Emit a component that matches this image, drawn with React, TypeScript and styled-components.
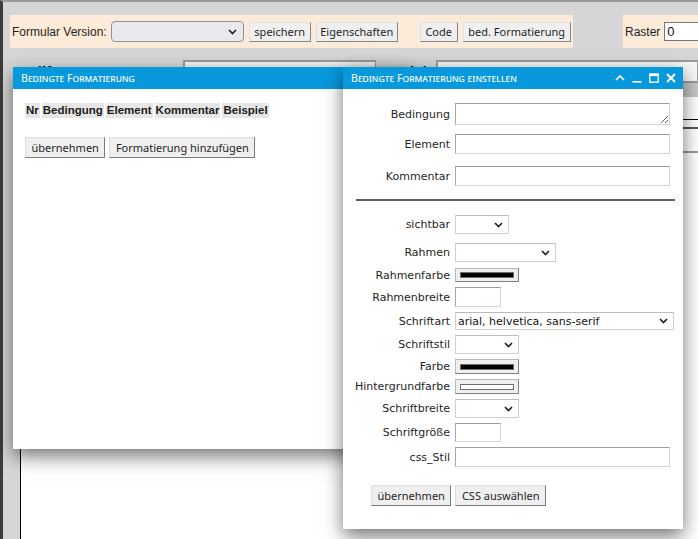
import React from 'react';
import styled, { createGlobalStyle } from 'styled-components';

const Global = createGlobalStyle`
  html, body { margin: 0; padding: 0; background: #d6d6d6; overflow: hidden; }
  body { font-family: "DejaVu Sans", sans-serif; }
`;

const Desktop = styled.div`
  position: relative;
  width: 698px;
  height: 539px;
  overflow: hidden;
`;

const Page = styled.div`
  width: 698px;
  height: 539px;
  box-sizing: border-box;
  border-top: 2px solid #9a9a9a;
  border-left: 3px solid #3c3c3c;
  background: #d6d6d6;
  display: flex;
  flex-direction: column;
`;

const Toolbar = styled.div`
  display: flex;
  gap: 50px;
  height: 33px;
  margin: 13px 0 0 7px;
`;

const Segment = styled.div<{ $w?: number }>`
  display: flex;
  align-items: center;
  background: #fbebd8;
  box-sizing: border-box;
  padding-left: 2px;
  ${(p) => (p.$w ? `width: ${p.$w}px; flex: none;` : 'flex: 1;')}
`;

const ToolLabel = styled.span`
  flex: none;
  white-space: nowrap;
  font-family: "Liberation Sans", Arial, sans-serif;
  font-size: 12px;
  color: #1e1e1e;
`;

const ToolSelect = styled.div`
  flex: none;
  display: flex;
  align-items: center;
  justify-content: flex-end;
  width: 133px;
  height: 21px;
  box-sizing: border-box;
  margin-left: 4px;
  padding-right: 6px;
  border: 1px solid #8f8f9d;
  border-radius: 4px;
  background: #e9e9ed;
`;

const ToolButton = styled.button<{ $w: number; $ml?: number }>`
  flex: none;
  width: ${(p) => p.$w}px;
  height: 20px;
  margin-left: ${(p) => p.$ml ?? 5}px;
  padding: 0;
  box-sizing: border-box;
  font-family: "Noto Sans", sans-serif;
  font-size: 11px;
  color: #1e1e1e;
  background: #efefef;
  border: 1px solid #e2e2e2;
  border-right-color: #858585;
  border-bottom-color: #858585;
  line-height: 18px;
  white-space: nowrap;
`;

const RasterInput = styled.div`
  flex: 1;
  height: 19px;
  margin-left: 4px;
  box-sizing: border-box;
  border: 1px solid #767676;
  border-right: none;
  background: #fff;
  font-family: "Liberation Sans", Arial, sans-serif;
  font-size: 13px;
  line-height: 17px;
  padding-left: 2px;
  color: #111;
`;

const HiddenRow = styled.div`
  display: flex;
  align-items: flex-start;
  height: 23px;
  margin-top: 12px;
`;

const HiddenLabel = styled.span<{ $w: number; $pl: number }>`
  flex: none;
  width: ${(p) => p.$w}px;
  height: 7px;
  overflow: hidden;
  box-sizing: border-box;
  padding-left: ${(p) => p.$pl}px;
  font-family: "Liberation Sans", Arial, sans-serif;
  font-weight: bold;
  font-size: 15px;
  line-height: 23px;
  color: #111;
  white-space: nowrap;
`;

const HiddenInput = styled.div<{ $w?: number }>`
  height: 23px;
  box-sizing: border-box;
  border: 2px solid #9b9b9b;
  border-right-width: 1px;
  background: #f7f7f7;
  ${(p) => (p.$w ? `width: ${p.$w}px; flex: none;` : 'flex: 1;')}
`;

const Panel = styled.div`
  flex: 1;
  margin-left: 17px;
  background: #fff;
  border-left: 1px solid #000;
  display: flex;
  flex-direction: column;
`;

const PanelBar = styled.div`
  height: 14px;
  background: #c6c6c6;
`;

const PanelLine = styled.div<{ $h: number; $c: string; $w: number }>`
  height: ${(p) => p.$h}px;
  border-bottom: ${(p) => p.$w}px solid ${(p) => p.$c};
`;

const Window = styled.section<{ $x: number; $y: number; $w: number; $h: number; $z: number }>`
  position: absolute;
  left: ${(p) => p.$x}px;
  top: ${(p) => p.$y}px;
  width: ${(p) => p.$w}px;
  height: ${(p) => p.$h}px;
  z-index: ${(p) => p.$z};
  background: #fff;
  box-shadow: 0 7px 18px rgba(0, 0, 0, 0.55);
  display: flex;
  flex-direction: column;
`;

const TitleBar = styled.header`
  height: 22px;
  flex: none;
  background: #0898dc;
  color: #fff;
  display: flex;
  align-items: center;
  justify-content: space-between;
  padding: 0 7px 0 8px;
  font-family: "Noto Sans", sans-serif;
  font-size: 10.6px;
  font-variant: small-caps;
`;

const TitleText = styled.span`
  line-height: 22px;
`;

const TitleControls = styled.div`
  display: flex;
  align-items: center;
  gap: 7px;
  height: 22px;
`;

const LeftBody = styled.div`
  padding: 14px 0 0 12px;
  display: flex;
  flex-direction: column;
`;

const HeadRow = styled.div`
  display: flex;
  gap: 2px;
`;

const HeadCell = styled.span`
  background: #e6e6e6;
  font-family: "Liberation Sans", Arial, sans-serif;
  font-weight: bold;
  font-size: 11.5px;
  line-height: 15px;
  padding: 0 1px;
  color: #1a1a1a;
`;

const ButtonRow = styled.div<{ $mt: number; $ml?: number }>`
  display: flex;
  gap: 4px;
  margin-top: ${(p) => p.$mt}px;
  margin-left: ${(p) => p.$ml ?? 0}px;
`;

const Button = styled.button`
  height: 21px;
  padding: 0 5.5px;
  box-sizing: border-box;
  font-family: "Noto Sans", sans-serif;
  font-size: 11px;
  color: #1e1e1e;
  background: #efefef;
  border: 1px solid #dedede;
  border-right-color: #7a7a7a;
  border-bottom-color: #7a7a7a;
  line-height: 19px;
  white-space: nowrap;
`;

const FormBody = styled.div`
  display: flex;
  flex-direction: column;
  gap: 5px;
  padding-top: 14px;
`;

const FormRow = styled.div<{ $mt?: number }>`
  display: grid;
  grid-template-columns: 107px auto;
  column-gap: 5px;
  align-items: center;
  justify-content: start;
  margin-top: ${(p) => p.$mt ?? 0}px;
`;

const Label = styled.label`
  text-align: right;
  font-family: "DejaVu Sans", Verdana, sans-serif;
  font-size: 11px;
  color: #1e1e1e;
  white-space: nowrap;
`;

const TextField = styled.input<{ $w: number; $h: number }>`
  width: ${(p) => p.$w}px;
  height: ${(p) => p.$h}px;
  box-sizing: border-box;
  margin: 0;
  padding: 0 2px;
  border: 1px solid #d4d4d4;
  border-top-color: #9d9d9d;
  border-left-color: #a8a8a8;
  background: #fff;
  outline: none;
`;

const TextArea = styled.textarea<{ $w: number; $h: number }>`
  display: block;
  width: ${(p) => p.$w}px;
  height: ${(p) => p.$h}px;
  box-sizing: border-box;
  margin: 0;
  padding: 0 2px;
  border: 1px solid #d4d4d4;
  border-top-color: #9d9d9d;
  border-left-color: #a8a8a8;
  background: #fff;
  resize: both;
  outline: none;
`;

const SelectBox = styled.div<{ $w: number; $h: number }>`
  width: ${(p) => p.$w}px;
  height: ${(p) => p.$h}px;
  box-sizing: border-box;
  border: 1px solid #cfcfcf;
  border-top-color: #bdbdbd;
  background: #fff;
  display: flex;
  align-items: center;
  justify-content: space-between;
  padding: 0 5px 0 2px;
  font-family: "DejaVu Sans", Verdana, sans-serif;
  font-size: 11px;
  color: #111;
`;

const ColorButton = styled.div<{ $h: number }>`
  width: 64px;
  height: ${(p) => p.$h}px;
  box-sizing: border-box;
  background: #efefef;
  border: 1px solid #b9b9b9;
  border-right-color: #808080;
  border-bottom-color: #808080;
  display: flex;
  align-items: center;
  padding: 0 4px;
`;

const Swatch = styled.span<{ $c: string }>`
  flex: 1;
  height: 6px;
  box-sizing: border-box;
  background: ${(p) => p.$c};
  border: 1px solid #6f6f6f;
`;

const Rule = styled.hr`
  width: 319px;
  margin: 8px 0 9px 13px;
  border: none;
  border-top: 2px solid #5f5f5f;
  height: 0;
`;

const Chevron = ({ w = 9, h = 6, color = '#222' }: { w?: number; h?: number; color?: string }) => (
  <svg width={w} height={h} viewBox="0 0 9 6" aria-hidden>
    <polyline points="1,1 4.5,4.5 8,1" fill="none" stroke={color} strokeWidth="1.7" />
  </svg>
);

const IconUp = () => (
  <svg width="10" height="10" viewBox="0 0 10 10" aria-hidden>
    <polyline points="1,7 5,3 9,7" fill="none" stroke="#fff" strokeWidth="1.6" />
  </svg>
);
const IconMin = () => (
  <svg width="10" height="10" viewBox="0 0 10 10" aria-hidden>
    <rect x="0.5" y="8" width="9" height="1.6" fill="#fff" />
  </svg>
);
const IconMax = () => (
  <svg width="10" height="10" viewBox="0 0 10 10" aria-hidden>
    <rect x="0.8" y="1.3" width="8.4" height="7.9" fill="none" stroke="#fff" strokeWidth="1.3" />
    <rect x="0.5" y="0.5" width="9" height="2.6" fill="#fff" />
  </svg>
);
const IconClose = () => (
  <svg width="10" height="10" viewBox="0 0 10 10" aria-hidden>
    <path d="M1 1 L9 9 M9 1 L1 9" stroke="#fff" strokeWidth="2" />
  </svg>
);

export default function App() {
  return (
    <Desktop>
      <Global />
      <Page>
        <Toolbar>
          <Segment $w={563}>
            <ToolLabel>Formular Version:</ToolLabel>
            <ToolSelect>
              <Chevron w={9} h={6} color="#222" />
            </ToolSelect>
            <ToolButton $w={62}>speichern</ToolButton>
            <ToolButton $w={82}>Eigenschaften</ToolButton>
            <ToolButton $w={38} $ml={22}>Code</ToolButton>
            <ToolButton $w={108}>bed. Formatierung</ToolButton>
          </Segment>
          <Segment>
            <ToolLabel>Raster</ToolLabel>
            <RasterInput>0</RasterInput>
          </Segment>
        </Toolbar>
        <HiddenRow>
          <HiddenLabel $w={180} $pl={24}>Hilfe zum Monat</HiddenLabel>
          <HiddenInput $w={193} />
          <HiddenLabel $w={60} $pl={24}>Sicht</HiddenLabel>
          <HiddenInput />
        </HiddenRow>
        <Panel>
          <PanelBar />
          <PanelLine $h={22} $c="#000" $w={1} />
          <PanelLine $h={7} $c="#555" $w={2} />
          <PanelLine $h={22} $c="#9a9a9a" $w={2} />
        </Panel>
      </Page>

      <Window $x={13} $y={67} $w={400} $h={382} $z={1}>
        <TitleBar>
          <TitleText>Bedingte Formatierung</TitleText>
        </TitleBar>
        <LeftBody>
          <HeadRow>
            <HeadCell>Nr</HeadCell>
            <HeadCell>Bedingung</HeadCell>
            <HeadCell>Element</HeadCell>
            <HeadCell>Kommentar</HeadCell>
            <HeadCell>Beispiel</HeadCell>
          </HeadRow>
          <ButtonRow $mt={19}>
            <Button>übernehmen</Button>
            <Button>Formatierung hinzufügen</Button>
          </ButtonRow>
        </LeftBody>
      </Window>

      <Window $x={343} $y={67} $w={340} $h={462} $z={2}>
        <TitleBar>
          <TitleText>Bedingte Formatierung einstellen</TitleText>
          <TitleControls>
            <IconUp />
            <IconMin />
            <IconMax />
            <IconClose />
          </TitleControls>
        </TitleBar>
        <FormBody>
          <FormRow>
            <Label>Bedingung</Label>
            <TextArea $w={215} $h={22} />
          </FormRow>
          <FormRow $mt={4}>
            <Label>Element</Label>
            <TextField $w={215} $h={20} />
          </FormRow>
          <FormRow $mt={7}>
            <Label>Kommentar</Label>
            <TextField $w={215} $h={20} />
          </FormRow>
          <Rule />
          <FormRow>
            <Label>sichtbar</Label>
            <SelectBox $w={54} $h={19}>
              <span />
              <Chevron />
            </SelectBox>
          </FormRow>
          <FormRow $mt={4}>
            <Label>Rahmen</Label>
            <SelectBox $w={101} $h={19}>
              <span />
              <Chevron />
            </SelectBox>
          </FormRow>
          <FormRow $mt={1}>
            <Label>Rahmenfarbe</Label>
            <ColorButton $h={14}>
              <Swatch $c="#000" />
            </ColorButton>
          </FormRow>
          <FormRow>
            <Label>Rahmenbreite</Label>
            <TextField $w={46} $h={20} />
          </FormRow>
          <FormRow>
            <Label>Schriftart</Label>
            <SelectBox $w={219} $h={18}>
              <span>arial, helvetica, sans-serif</span>
              <Chevron />
            </SelectBox>
          </FormRow>
          <FormRow>
            <Label>Schriftstil</Label>
            <SelectBox $w={64} $h={19}>
              <span />
              <Chevron />
            </SelectBox>
          </FormRow>
          <FormRow>
            <Label>Farbe</Label>
            <ColorButton $h={15}>
              <Swatch $c="#000" />
            </ColorButton>
          </FormRow>
          <FormRow>
            <Label>Hintergrundfarbe</Label>
            <ColorButton $h={15}>
              <Swatch $c="#fff" />
            </ColorButton>
          </FormRow>
          <FormRow>
            <Label>Schriftbreite</Label>
            <SelectBox $w={64} $h={19}>
              <span />
              <Chevron />
            </SelectBox>
          </FormRow>
          <FormRow>
            <Label>Schriftgröße</Label>
            <TextField $w={46} $h={19} />
          </FormRow>
          <FormRow>
            <Label>css_Stil</Label>
            <TextField $w={215} $h={20} />
          </FormRow>
          <ButtonRow $mt={13} $ml={28}>
            <Button>übernehmen</Button>
            <Button>CSS auswählen</Button>
          </ButtonRow>
        </FormBody>
      </Window>
    </Desktop>
  );
}
